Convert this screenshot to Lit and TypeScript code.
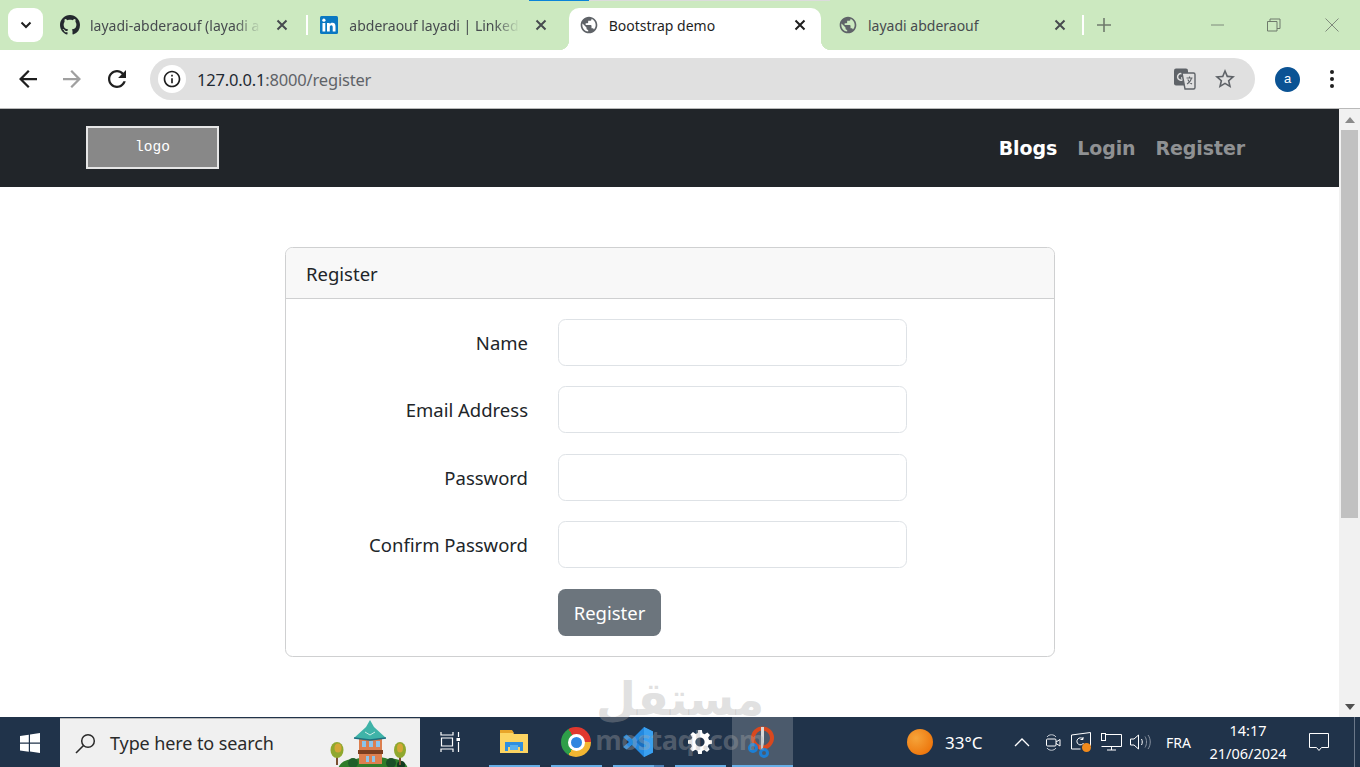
import { LitElement, html, css, svg } from "lit";
import { customElement } from "lit/decorators.js";

const GLOBE = "M12 2C6.48 2 2 6.48 2 12s4.48 10 10 10 10-4.48 10-10S17.52 2 12 2zm-1 17.93c-3.95-.49-7-3.85-7-7.93 0-.62.08-1.21.21-1.79L9 15v1c0 1.1.9 2 2 2v1.93zm6.9-2.54c-.26-.81-1-1.39-1.9-1.39h-1v-3c0-.55-.45-1-1-1H8v-2h2c.55 0 1-.45 1-1V7h2c1.1 0 2-.9 2-2v-.41c2.93 1.19 5 4.06 5 7.41 0 2.08-.8 3.97-2.1 5.39z";
const GITHUB = "M8 0C3.58 0 0 3.58 0 8c0 3.54 2.29 6.53 5.47 7.59.4.07.55-.17.55-.38 0-.19-.01-.82-.01-1.49-2.01.37-2.53-.49-2.69-.94-.09-.23-.48-.94-.82-1.13-.28-.15-.68-.52-.01-.53.63-.01 1.08.58 1.23.82.72 1.21 1.87.87 2.33.66.07-.52.28-.87.51-1.07-1.78-.2-3.64-.89-3.64-3.95 0-.87.31-1.59.82-2.15-.08-.2-.36-1.02.08-2.12 0 0 .67-.21 2.2.82.64-.18 1.32-.27 2-.27.68 0 1.36.09 2 .27 1.53-1.04 2.2-.82 2.2-.82.44 1.1.16 1.92.08 2.12.51.56.82 1.27.82 2.15 0 3.07-1.87 3.75-3.65 3.95.29.25.54.73.54 1.48 0 1.07-.01 1.93-.01 2.2 0 .21.15.46.55.38A8.013 8.013 0 0016 8c0-4.42-3.58-8-8-8z";

const globeIcon = html`<svg class="favicon" viewBox="0 0 24 24" width="20" height="20"><path fill="#5f6368" d=${GLOBE}></path></svg>`;
const githubIcon = html`<svg class="favicon" viewBox="0 0 16 16" width="20" height="20"><path fill="#24292e" d=${GITHUB}></path></svg>`;
const linkedinIcon = html`<svg class="favicon" viewBox="0 0 20 20" width="20" height="20"><rect x="1" y="1" width="18" height="18" rx="1.5" fill="#0a78c2"></rect><rect x="3.5" y="8" width="2.8" height="8.5" fill="#fff"></rect><circle cx="4.9" cy="5.2" r="1.6" fill="#fff"></circle><path fill="#fff" d="M8 8h2.7v1.2c.5-.8 1.4-1.4 2.7-1.4 2.4 0 3.1 1.6 3.1 3.9v4.8h-2.8v-4.3c0-1-.2-2-1.4-2s-1.5 1-1.5 2v4.3H8z"></path></svg>`;
const closeIcon = (c: string) => html`<svg class="close" viewBox="0 0 16 16" width="16" height="16"><path d="M3.5 3.5l9 9M12.5 3.5l-9 9" stroke=${c} stroke-width="2" fill="none"></path></svg>`;

const towerScene = svg`
  <path d="M9 50c2-8 10-10 18-10 8-3 26-3 32 0 8-1 18 1 20 10z" fill="#2f7d2a"></path>
  <circle cx="24" cy="44" r="5" fill="#1f5f2a"></circle><circle cx="62" cy="44" r="5" fill="#1b4f28"></circle><circle cx="72" cy="46" r="4" fill="#123a20"></circle>
  <rect x="7" y="36" width="2" height="10" fill="#7a5030"></rect>
  <ellipse cx="8" cy="31" rx="6.5" ry="8" fill="#8fa82e"></ellipse><ellipse cx="9" cy="29" rx="3.5" ry="4.5" fill="#d4a636"></ellipse>
  <rect x="70" y="36" width="2" height="10" fill="#7a5030"></rect>
  <ellipse cx="71" cy="31" rx="6" ry="8" fill="#8fa82e"></ellipse><ellipse cx="71" cy="29" rx="3" ry="4.5" fill="#d4a636"></ellipse>
  <rect x="30" y="18" width="23" height="27" fill="#dc7f4f"></rect>
  <rect x="29" y="31" width="25" height="4" fill="#7c3f20"></rect>
  <rect x="33" y="22" width="4" height="6" fill="#8cc4ea"></rect><rect x="40" y="22" width="4" height="6" fill="#8cc4ea"></rect><rect x="47" y="22" width="4" height="6" fill="#8cc4ea"></rect>
  <rect x="37" y="37" width="3" height="6" fill="#8cc4ea"></rect><rect x="43" y="37" width="3" height="6" fill="#8cc4ea"></rect>
  <path d="M41 1l4 7 12 11-16 2-16-2 12-11z" fill="#3fb3a8"></path>
  <path d="M25 19l16 2 16-2" stroke="#1f6f80" stroke-width="1.5" fill="none"></path>
  <path d="M36 13l5 3 5-3" stroke="#c9ece6" stroke-width="1" fill="none"></path>
`;

@customElement("app-root")
export class AppRoot extends LitElement {
  static styles = css`
    :host { display: block; position: relative; width: 1360px; height: 767px; overflow: hidden; background: #fff; font-family: "Noto Sans", "Open Sans", sans-serif; color: #212529; }
    .shell { display: flex; flex-direction: column; height: 767px; }

    .tabstrip { position: relative; display: flex; align-items: flex-end; height: 50px; padding-left: 8px; background: #cce9c0; flex: none; }
    .loadline { position: absolute; left: 529px; top: 0; width: 301px; height: 1px; background: #dcdcdc; }
    .loadline i { display: block; width: 60px; height: 1px; background: #0a84d8; }
    .selector { width: 35px; height: 34px; margin-bottom: 8px; margin-right: 8px; border-radius: 9px; background: #fff; display: flex; align-items: center; justify-content: center; flex: none; }
    .tab { position: relative; display: flex; align-items: center; width: 252px; height: 42px; padding: 0 13px 8px 9px; box-sizing: border-box; flex: none; font-size: 14px; color: #474b4f; }
    .tab.on { background: #fff; border-radius: 10px 10px 0 0; color: #1f1f1f; margin-left: -1px; margin-right: 1px; padding-left: 10px; padding-right: 12px; }
    .tab.on::before, .tab.on::after { content: ""; position: absolute; bottom: 0; width: 10px; height: 10px; }
    .tab.on::before { left: -10px; background: radial-gradient(circle at 0 0, transparent 10px, #fff 10.5px); }
    .tab.on::after { right: -10px; background: radial-gradient(circle at 100% 0, transparent 10px, #fff 10.5px); }
    .tab.on .close { margin-left: 12px; }
    .favicon { flex: none; margin-right: 10px; }
    .title { width: 171px; flex: none; white-space: nowrap; }
    .fade { -webkit-mask-image: linear-gradient(90deg, #000 85%, transparent); mask-image: linear-gradient(90deg, #000 85%, transparent); }
    .close { flex: none; margin-left: 13px; }
    .sep { width: 7.33px; height: 42px; padding-bottom: 8px; box-sizing: border-box; flex: none; display: flex; justify-content: center; align-items: center; }
    .sep i { display: block; width: 2px; height: 20px; background: #fff; }
    .sep.last { margin-left: -2px; }
    .plus { margin-left: 10px; margin-bottom: 17px; flex: none; display: block; }
    .winbtns { display: flex; margin-left: auto; align-self: flex-start; margin-top: 17px; margin-right: 20px; }
    .winbtns svg { display: block; margin-left: 40px; }
    .winbtns svg:last-child { margin-left: 42px; }

    .toolbar { display: flex; align-items: center; height: 58px; background: #fff; border-radius: 10px 10px 0 0; padding-left: 19px; flex: none; box-sizing: border-box; }
    .toolbar .nav { display: block; flex: none; }
    .nav-fwd { margin-left: 26px; }
    .nav-rel { margin-left: 27px; }
    .omni { display: flex; align-items: center; width: 1105px; height: 42px; margin-left: 24px; border-radius: 21px; background: #e0e0e0; box-sizing: border-box; padding: 0 19px 0 8px; flex: none; }
    .omni svg { flex: none; display: block; }
    .omni .star { margin-left: 18px; }
    .infobtn { width: 28px; height: 28px; border-radius: 50%; background: #fff; display: flex; align-items: center; justify-content: center; flex: none; }
    .url { margin-left: 11px; font-size: 16.5px; letter-spacing: -.18px; color: #1f2a33; flex: 1; white-space: nowrap; }
    .url span { color: #5f6368; }
    .avatar { width: 25px; height: 25px; border-radius: 50%; background: #0b5394; color: #fff; font-family: "Liberation Sans", sans-serif; font-size: 13px; line-height: 24px; text-align: center; margin-left: 20px; flex: none; }
    .kebab { margin-left: 30px; display: block; flex: none; }
    .hair { height: 1px; background: #b9b9b9; flex: none; }

    .viewport { display: flex; flex: 1; min-height: 0; }
    .page { flex: 1; min-width: 0; }
    .navbar { height: 78px; background: #212529; display: flex; align-items: center; padding-left: 86px; padding-right: 94px; box-sizing: border-box; }
    .logo { width: 133px; height: 43px; margin-top: -2px; box-sizing: border-box; border: 2px solid #e6e6e6; background: #888; color: #fff; font-family: "Liberation Mono", monospace; font-size: 14.5px; display: flex; align-items: center; justify-content: center; padding-bottom: 1px; }
    .links { margin-left: auto; display: flex; gap: 20px; font-family: "DejaVu Sans", sans-serif; font-weight: 700; font-size: 19px; letter-spacing: -.1px; color: #8f9193; }
    .links .act { color: #fff; }
    .card { width: 770px; height: 410px; margin: 60px 0 0 285px; box-sizing: border-box; border: 1px solid #cfd0d1; border-radius: 7.5px; overflow: hidden; }
    .card-h { height: 51px; box-sizing: border-box; border-bottom: 1px solid #cfd0d1; background: #f8f8f8; padding: 0 20px; display: flex; align-items: center; font-size: 18.5px; }
    .card-b { display: grid; grid-template-columns: 242px 349px; column-gap: 30px; row-gap: 20.33px; padding-top: 20px; align-items: center; }
    .lab { text-align: right; font-size: 18.5px; height: 47px; line-height: 48px; }
    .inp { height: 47px; box-sizing: border-box; border: 1px solid #dee2e6; border-radius: 7.5px; background: #fff; }
    .btn { grid-column: 2; justify-self: start; width: 103px; height: 47px; margin-top: .67px; border-radius: 7.5px; background: #6c757d; color: #fff; font-size: 18.5px; display: flex; align-items: center; justify-content: center; }

    .scroll { width: 21px; flex: none; background: #f1f1f1; display: flex; flex-direction: column; align-items: center; position: relative; }
    .arrow { height: 21px; flex: none; display: flex; align-items: center; justify-content: center; }
    .thumb { width: 17px; height: 388px; background: #c1c1c1; flex: none; }
    .spacer { flex: 1; }

    .taskbar { height: 50px; background: #20334a; display: flex; align-items: stretch; color: #fff; flex: none; position: relative; font-family: "Noto Sans", sans-serif; }
    .start { width: 60px; display: flex; align-items: center; justify-content: center; flex: none; padding-top: 2px; box-sizing: border-box; }
    .search { position: relative; width: 360px; margin-top: 1px; background: #f0f0f0; border-top: 1px solid #bcbcbc; box-sizing: border-box; display: flex; align-items: center; padding-left: 15px; color: #2a2a2a; font-size: 18px; letter-spacing: -.1px; flex: none; overflow: hidden; }
    .search .q { margin-right: 14px; flex: none; }
    .scene { position: absolute; left: 269px; top: 0; }
    .taskview { width: 60px; display: flex; align-items: center; justify-content: center; flex: none; margin-right: 9px; }
    .app { width: 51px; margin-right: 11px; display: flex; align-items: center; justify-content: center; position: relative; flex: none; border-bottom: 2px solid #67aee6; box-sizing: border-box; padding: 2px 1px 0 0; }
    .app.hot { width: 61px; margin-left: -5px; background: #4b5a6c; margin-right: 0; }
    .app.two::after { content: ""; position: absolute; right: 0; bottom: -2px; width: 10px; height: 2px; background: #4d81b6; }
    .chrome { width: 30px; height: 30px; border-radius: 50%; background: conic-gradient(from -30deg, #e0382e 0 120deg, #f2b632 120deg 240deg, #2e9e49 240deg 360deg); display: flex; align-items: center; justify-content: center; }
    .chrome i { display: block; width: 11px; height: 11px; border-radius: 50%; background: #2f86e0; border: 3px solid #fff; }
    .tray { margin-left: auto; display: flex; align-items: center; flex: none; font-size: 15px; position: relative; }
    .sun { width: 26px; height: 26px; border-radius: 50%; background: radial-gradient(circle at 35% 35%, #f5a43a, #ee7a10 70%, #d85f10); flex: none; margin-right: 12px; }
    .temp { font-size: 17px; width: 39px; margin-right: 30px; white-space: nowrap; }
    .tray svg { display: block; flex: none; }
    .i-cam { margin-left: 16px; }
    .i-rate { margin-left: 10px; }
    .i-net { margin-left: 9px; }
    .i-vol { margin-left: 8px; }
    .lang { font-size: 14px; margin-left: 15px; width: 27px; white-space: nowrap; }
    .clock { width: 78px; margin-left: 16px; text-align: center; font-size: 14.5px; line-height: 23px; white-space: nowrap; }
    .notif { margin-left: 22px; margin-right: 31px; }
    .desk { position: absolute; right: 5px; top: 0; width: 1px; height: 50px; background: #6a7788; }

    .wm { position: absolute; left: 590px; top: 673px; width: 180px; text-align: center; color: rgba(170,170,170,.36); pointer-events: none; font-family: "DejaVu Sans", sans-serif; font-weight: 700; }
    .wm .ar { font-size: 46px; line-height: 52px; white-space: nowrap; }
    .wm .en { font-size: 27px; line-height: 30px; letter-spacing: -.5px; white-space: nowrap; font-family: "Open Sans", sans-serif; }
  `;

  private tab(icon: unknown, title: string, cls = "", titleCls = "") {
    return html`<div class="tab ${cls}">${icon}<div class="title ${titleCls}">${title}</div>${closeIcon(cls.includes("on") ? "#1f1f1f" : "#474b4f")}</div>`;
  }

  render() {
    return html`
      <div class="shell">
        <div class="tabstrip">
          <div class="loadline"><i></i></div>
          <div class="selector"><svg width="12" height="8" viewBox="0 0 12 8"><path d="M1.5 1.5L6 6l4.5-4.5" stroke="#1f1f1f" stroke-width="2" fill="none"></path></svg></div>
          ${this.tab(githubIcon, "layadi-abderaouf (layadi a", "", "fade")}
          <div class="sep"><i></i></div>
          ${this.tab(linkedinIcon, "abderaouf layadi | Linkedl", "", "fade")}
          <div class="sep"></div>
          ${this.tab(globeIcon, "Bootstrap demo", "on")}
          <div class="sep"></div>
          ${this.tab(globeIcon, "layadi abderaouf")}
          <div class="sep last"><i></i></div>
          <svg class="plus" width="16" height="16" viewBox="0 0 16 16"><path d="M8 1v14M1 8h14" stroke="#6f7a6c" stroke-width="1.6"></path></svg>
          <div class="winbtns">
            <svg width="16" height="16" viewBox="0 0 16 16"><path d="M1 8h13" stroke="#7f8a7c" stroke-width="1"></path></svg>
            <svg width="16" height="16" viewBox="0 0 16 16"><path d="M1.5 4.5h9.5v9.5h-9.5zM4 4.5V2h10v9.5h-3" stroke="#6f7a6c" fill="none"></path></svg>
            <svg width="16" height="16" viewBox="0 0 16 16"><path d="M1.5 1.5l13 13M14.5 1.5l-13 13" stroke="#7f8a7c" fill="none"></path></svg>
          </div>
        </div>
        <div class="toolbar">
          <svg class="nav" width="18" height="18" viewBox="4 4 16 16"><path fill="#1f1f1f" d="M20 11H7.83l5.59-5.59L12 4l-8 8 8 8 1.41-1.41L7.83 13H20v-2z"></path></svg>
          <svg class="nav nav-fwd" width="18" height="18" viewBox="4 4 16 16"><path fill="#a0a0a0" d="M12 4l-1.41 1.41L16.17 11H4v2h12.17l-5.58 5.59L12 20l8-8z"></path></svg>
          <svg class="nav nav-rel" width="18" height="18" viewBox="4 4 16 16"><path fill="#1f1f1f" d="M17.65 6.35C16.2 4.9 14.21 4 12 4c-4.42 0-7.99 3.58-7.99 8s3.57 8 7.99 8c3.73 0 6.84-2.55 7.73-6h-2.08c-.82 2.33-3.04 4-5.65 4-3.31 0-6-2.69-6-6s2.69-6 6-6c1.66 0 3.14.69 4.22 1.78L13 11h7V4l-2.35 2.35z"></path></svg>
          <div class="omni">
            <div class="infobtn"><svg width="20" height="20" viewBox="0 0 24 24"><path fill="#1f1f1f" d="M11 7h2v2h-2zm0 4h2v6h-2zm1-9C6.48 2 2 6.48 2 12s4.48 10 10 10 10-4.48 10-10S17.52 2 12 2zm0 18c-4.41 0-8-3.59-8-8s3.59-8 8-8 8 3.59 8 8-3.59 8-8 8z"></path></svg></div>
            <div class="url">127.0.0.1<span>:8000/register</span></div>
            <svg width="22" height="22" viewBox="0 0 22 22">
              <rect x="0" y="0.5" width="14" height="17" rx="2" fill="#5f6368"></rect>
              <path d="M9.5 6.8A3.3 3.3 0 1 0 10 10H7" stroke="#e0e0e0" stroke-width="1.5" fill="none"></path>
              <path d="M8 5h11.5a1.5 1.5 0 0 1 1.5 1.5v13a1.5 1.5 0 0 1-1.5 1.5H11z" fill="#e0e0e0" stroke="#5f6368" stroke-width="1.4"></path>
              <path d="M12.5 10h6M15.5 8.5v1.5M17.5 10c-.6 3-2.5 5-4.5 6M13.8 11.5c.8 2 2.5 3.6 4.2 4.4" stroke="#5f6368" stroke-width="1.1" fill="none"></path>
            </svg>
            <svg class="star" width="22" height="22" viewBox="1 1 22 22"><path fill="#5f6368" d="M22 9.24l-7.19-.62L12 2 9.19 8.63 2 9.24l5.46 4.73L5.82 21 12 17.27 18.18 21l-1.63-7.03L22 9.24zM12 15.4l-3.76 2.27 1-4.28-3.32-2.88 4.38-.38L12 6.1l1.71 4.04 4.38.38-3.32 2.88 1 4.28L12 15.4z"></path></svg>
          </div>
          <div class="avatar">a</div>
          <svg class="kebab" width="4" height="20" viewBox="0 0 4 20"><circle cx="2" cy="3" r="2" fill="#1f1f1f"></circle><circle cx="2" cy="10" r="2" fill="#1f1f1f"></circle><circle cx="2" cy="17" r="2" fill="#1f1f1f"></circle></svg>
        </div>
        <div class="hair"></div>
        <div class="viewport">
          <div class="page">
            <div class="navbar">
              <div class="logo">logo</div>
              <div class="links"><span class="act">Blogs</span><span>Login</span><span>Register</span></div>
            </div>
            <div class="card">
              <div class="card-h">Register</div>
              <div class="card-b">
                <div class="lab">Name</div><div class="inp"></div>
                <div class="lab">Email Address</div><div class="inp"></div>
                <div class="lab">Password</div><div class="inp"></div>
                <div class="lab">Confirm Password</div><div class="inp"></div>
                <div class="btn">Register</div>
              </div>
            </div>
          </div>
          <div class="scroll">
            <div class="arrow"><svg width="10" height="6" viewBox="0 0 10 6"><path d="M5 0l5 6H0z" fill="#8a8a8a"></path></svg></div>
            <div class="thumb"></div>
            <div class="spacer"></div>
            <div class="arrow"><svg width="10" height="6" viewBox="0 0 10 6"><path d="M0 0h10L5 6z" fill="#505050"></path></svg></div>
          </div>
        </div>
        <div class="taskbar">
          <div class="start"><svg width="20" height="20" viewBox="0 0 20 20"><path fill="#fff" d="M0 3l8.8-1.3v7.9H0zM10 1.5L20 0v9.6H10zM0 10.8h8.8v7.9L0 17.4zM10 10.8h10V20l-10-1.4z"></path></svg></div>
          <div class="search">
            <svg class="q" width="21" height="21" viewBox="0 0 21 21"><circle cx="13" cy="8" r="6.3" stroke="#2a2a2a" stroke-width="1.5" fill="none"></circle><path d="M8.5 12.5L1 20" stroke="#2a2a2a" stroke-width="1.6"></path></svg>
            Type here to search
            <svg class="scene" width="82" height="50" viewBox="0 0 82 50">${towerScene}</svg>
          </div>
          <div class="taskview"><svg width="20" height="20" viewBox="0 0 20 20"><path d="M1 0v3h12V0M1 20v-3h12v3M1.5 6h11v8h-11z" stroke="#fff" stroke-width="1.2" fill="none"></path><path d="M18.5 0v5M18.5 10v10" stroke="#fff" stroke-width="1.2"></path><rect x="16.5" y="6" width="4" height="3" fill="#fff"></rect></svg></div>
          <div class="app"><svg width="28" height="26" viewBox="0 0 28 26"><path d="M0 2h12l2 3h14v19H0z" fill="#fcd462"></path><path d="M0 1h12l2 3H0z" fill="#e8a52a"></path><path d="M5 13h18v9h-3v-4H8v4H5z" fill="#2f8fe0"></path><rect x="10" y="16" width="8" height="5" fill="#5ab0ee"></rect></svg></div>
          <div class="app"><div class="chrome"><i></i></div></div>
          <div class="app two"><svg width="30" height="30" viewBox="0 0 30 30"><path d="M21 0l9 4.5v21L21 30 9 18l-5.5 4.5L0 20l6-5-6-5 3.5-2.5L9 12z" fill="#2489e0"></path><path d="M21 8l-8 7 8 7z" fill="#1a6fc0"></path><path d="M21 0l9 4.5v21L21 30z" fill="#3aa0f0"></path></svg></div>
          <div class="app"><svg width="24" height="24" viewBox="0 0 26 26"><path fill="#fff" fill-rule="evenodd" d="M11 0h4l.7 3.6 2.3 1 3-2 2.8 2.8-2 3 1 2.3L26 11v4l-3.6.7-1 2.3 2 3-2.8 2.8-3-2-2.3 1L15 26h-4l-.7-3.6-2.3-1-3 2-2.8-2.8 2-3-1-2.3L0 15v-4l3.6-.7 1-2.3-2-3L5.4 2.2l3 2 2.3-1zM13 8a5 5 0 1 0 0 10 5 5 0 0 0 0-10z"></path></svg></div>
          <div class="app hot"><svg width="28" height="32" viewBox="0 0 28 32"><circle cx="14.5" cy="12" r="9.5" stroke="#d9481e" stroke-width="4" fill="none"></circle><path d="M13 1h3v15l-1.5 8H13z" fill="#d8d8d8"></path><circle cx="5" cy="22" r="3.5" stroke="#1d7fd4" stroke-width="3" fill="none"></circle><circle cx="16" cy="27" r="3.5" stroke="#1d7fd4" stroke-width="3" fill="none"></circle></svg></div>
          <div class="tray">
            <div class="sun"></div>
            <div class="temp">33°C</div>
            <svg width="16" height="10" viewBox="0 0 16 10"><path d="M1 9l7-7 7 7" stroke="#fff" stroke-width="1.3" fill="none"></path></svg>
            <svg class="i-cam" width="15" height="19" viewBox="0 0 15 19"><path d="M1 4c2-3 7-3 9 0M1 15c2 3 7 3 9 0" stroke="#c8ced6" fill="none"></path><rect x=".5" y="6" width="9.5" height="7" rx="1" stroke="#fff" fill="none"></rect><path d="M10 9l4-2.500v6.500l-4-2.500" stroke="#fff" fill="none"></path></svg>
            <svg class="i-rate" width="21" height="20" viewBox="0 0 21 20"><path d="M.5 3L19.5.5v13h-3M.5 3v14h9" stroke="#fff" fill="none"></path><path d="M12 7a3.5 3.5 0 1 0 .5 4M12 5v2.500H9.5" stroke="#fff" fill="none"></path><circle cx="15.5" cy="15.5" r="4.5" fill="#f08a1c"></circle></svg>
            <svg class="i-net" width="21" height="18" viewBox="0 0 21 18"><path d="M4 1.5h16.5v12H.5M10.5 13.5v3.500M6 17h9" stroke="#fff" fill="none"></path><rect x=".5" y=".5" width="4" height="7" stroke="#fff" fill="#20334a"></rect></svg>
            <svg class="i-vol" width="21" height="16" viewBox="0 0 21 16"><path d="M.5 5h3.500l4.500-4v14l-4.500-4H.5z" stroke="#fff" fill="none"></path><path d="M11.5 5c1 1.500 1 4.500 0 6" stroke="#fff" fill="none"></path><path d="M15 2.500c2 3 2 8 0 11M18 1c3 4 3 10 0 14" stroke="#8a94a2" fill="none"></path></svg>
            <div class="lang">FRA</div>
            <div class="clock">14:17<br />21/06/2024</div>
            <svg class="notif" width="20" height="19" viewBox="0 0 20 19"><path d="M.5.5h19v14h-7l-2.500 3-2.500-3h-7z" stroke="#fff" fill="none"></path></svg>
            <div class="desk"></div>
          </div>
        </div>
      </div>
      <div class="wm"><div class="ar" dir="rtl">مستقل</div><div class="en">mostaql.com</div></div>
    `;
  }
}
